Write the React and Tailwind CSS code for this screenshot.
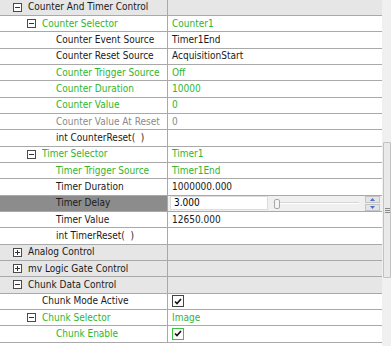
const GREEN = "text-[#2fb52f]";

const rows = [
  { kind: "group", level: 0, open: true, label: "Counter And Timer Control" },
  { level: 1, box: true, label: "Counter Selector", value: "Counter1", tone: "green" },
  { level: 2, label: "Counter Event Source", value: "Timer1End" },
  { level: 2, label: "Counter Reset Source", value: "AcquisitionStart" },
  { level: 2, label: "Counter Trigger Source", value: "Off", tone: "green" },
  { level: 2, label: "Counter Duration", value: "10000", tone: "green" },
  { level: 2, label: "Counter Value", value: "0", tone: "green" },
  { level: 2, label: "Counter Value At Reset", value: "0", tone: "gray" },
  { level: 2, label: "int CounterReset(  )", value: "" },
  { level: 1, box: true, label: "Timer Selector", value: "Timer1", tone: "green" },
  { level: 2, label: "Timer Trigger Source", value: "Timer1End", tone: "green" },
  { level: 2, label: "Timer Duration", value: "1000000.000" },
  { level: 2, label: "Timer Delay", value: "3.000", editing: true },
  { level: 2, label: "Timer Value", value: "12650.000" },
  { level: 2, label: "int TimerReset(  )", value: "" },
  { kind: "group", level: 0, open: false, label: "Analog Control" },
  { kind: "group", level: 0, open: false, label: "mv Logic Gate Control" },
  { kind: "group", level: 0, open: true, label: "Chunk Data Control" },
  { level: 1, label: "Chunk Mode Active", check: "black" },
  { level: 1, box: true, label: "Chunk Selector", value: "Image", tone: "green" },
  { level: 2, label: "Chunk Enable", check: "green", tone: "green" },
];

const toneClass = (tone) =>
  tone === "green" ? GREEN : tone === "gray" ? "text-[#8a8a8a]" : "text-[#1a1a1a]";

const Expander = ({ open }) => (
  <div className="w-[9px] h-[9px] border border-[#4a4a4a] bg-white relative shrink-0">
    <div className="absolute left-[1px] right-[1px] top-[3px] h-[1px] bg-[#333]" />
    {!open && <div className="absolute top-[1px] bottom-[1px] left-[3px] w-[1px] bg-[#333]" />}
  </div>
);

const Check = ({ color }) => (
  <div
    className={`w-[12px] h-[12px] border bg-white flex items-center justify-center ${
      color === "green" ? "border-[#3cc23c]" : "border-[#444]"
    }`}
  >
    <svg width="8" height="7" viewBox="0 0 8 7">
      <path d="M1 3.5 L3 5.5 L7 1" stroke="#111" strokeWidth="1.6" fill="none" />
    </svg>
  </div>
);

const DelayEditor = ({ value }) => (
  <div className="flex items-center h-full bg-[#f0f0f0] pr-[2px]">
    <div className="w-[98px] h-[14px] bg-white border border-[#dcdcdc] flex items-center pl-[3px] ml-[2px]">
      {value}
    </div>
    <div className="flex-1 relative h-full flex items-center ml-[5px] mr-[6px]">
      <div className="w-full h-[2px] bg-[#d6d6d6] border-b border-white" />
      <div className="absolute left-[1px] top-[3px] w-[6px] h-[10px] rounded-[2px] border border-[#a8a8a8] bg-[#f4f4f4]" />
    </div>
    <div className="flex flex-col gap-[1px]">
      <div className="w-[15px] h-[7px] bg-[#e4e4e4] border border-[#c4c4c4] flex items-center justify-center">
        <svg width="5" height="3" viewBox="0 0 5 3"><path d="M0 3 L2.5 0 L5 3Z" fill="#4a6fc4" /></svg>
      </div>
      <div className="w-[15px] h-[7px] bg-[#e4e4e4] border border-[#c4c4c4] flex items-center justify-center">
        <svg width="5" height="3" viewBox="0 0 5 3"><path d="M0 0 L2.5 3 L5 0Z" fill="#4a6fc4" /></svg>
      </div>
    </div>
  </div>
);

const Row = ({ r }) => {
  const group = r.kind === "group";
  const indent = 13 + r.level * 14;
  return (
    <div
      className={`flex h-[16.33px] border-b border-[#a9a9a9] ${group ? "bg-[#e6e6e6]" : "bg-white"}`}
    >
      <div
        className={`w-[168px] shrink-0 flex items-center overflow-hidden border-r border-[#a9a9a9] ${
          r.editing ? "bg-[#8c8c8c]" : ""
        }`}
        style={{ paddingLeft: indent }}
      >
        {group || r.box ? <Expander open={group ? r.open : true} /> : <div className="w-[9px] shrink-0" />}
        <span className={`ml-[6px] whitespace-pre ${group ? "text-[#1a1a1a]" : toneClass(r.tone)}`}>
          {r.label}
        </span>
      </div>
      <div className="flex-1 min-w-0">
        {r.editing ? (
          <DelayEditor value={r.value} />
        ) : r.check ? (
          <div className="h-full flex items-center pl-[4px]">
            <Check color={r.check} />
          </div>
        ) : (
          <div className={`h-full flex items-center pl-[4px] whitespace-nowrap ${toneClass(r.tone)}`}>
            {r.value}
          </div>
        )}
      </div>
    </div>
  );
};

export default function App() {
  return (
    <div
      className="w-[391px] h-[346px] overflow-hidden bg-white flex text-[10px] leading-none"
      style={{ fontFamily: '"DejaVu Sans Condensed", "DejaVu Sans", sans-serif' }}
    >
      <div className="w-[382px] shrink-0 -mt-[0.4px]">
        {rows.map((r, i) => (
          <Row key={i} r={r} />
        ))}
      </div>
      {/* scrollbar */}
      <div className="flex-1 bg-[#f0f0f0] flex flex-col">
        <div className="mt-[142px] h-[136px] ml-[1px] bg-[#e9e9e9] border border-[#c2c2c2] rounded-[1px] flex flex-col items-center justify-center gap-[1px]">
          <div className="w-[5px] h-[1px] bg-[#8a8a8a]" />
          <div className="w-[5px] h-[1px] bg-[#8a8a8a]" />
          <div className="w-[5px] h-[1px] bg-[#8a8a8a]" />
        </div>
      </div>
    </div>
  );
}
